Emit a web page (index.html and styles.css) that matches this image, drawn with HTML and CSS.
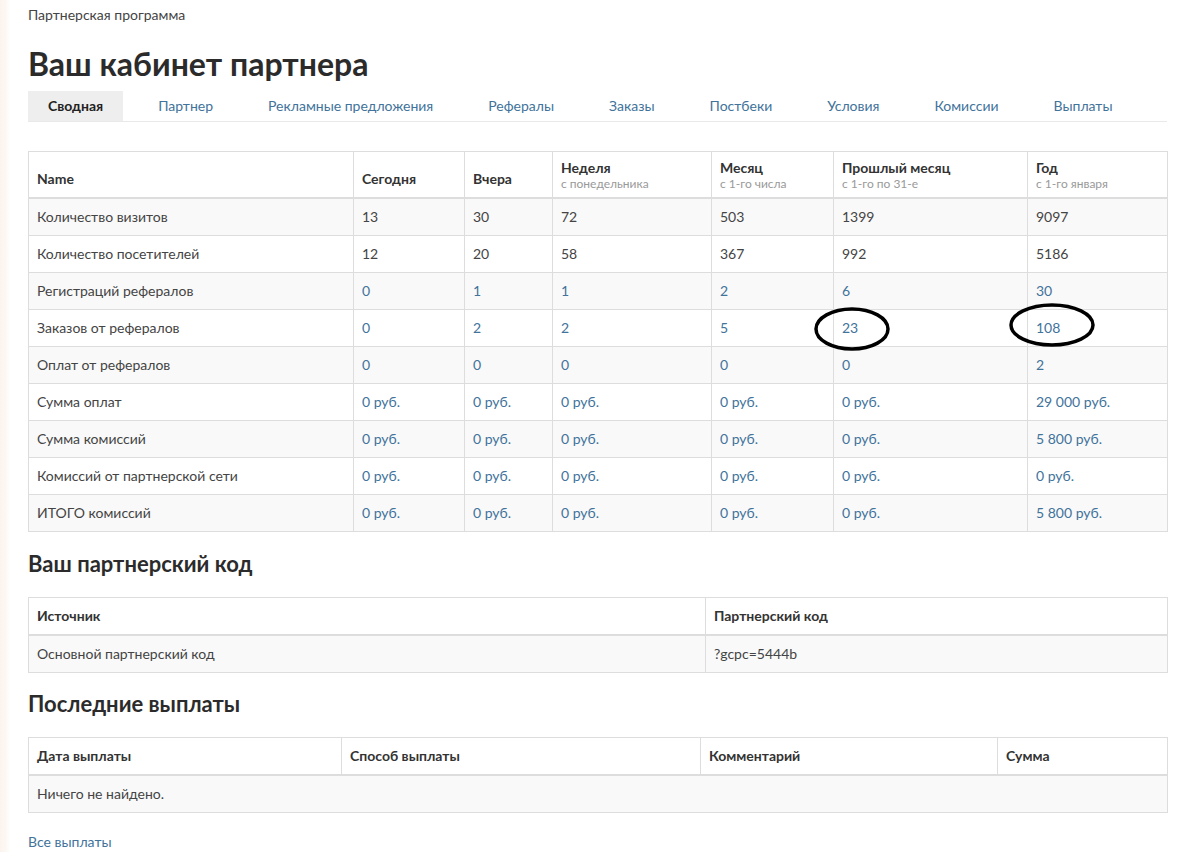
FILE: index.html
```html
<!DOCTYPE html>
<html lang="ru">
<head>
<meta charset="utf-8">
<title>Ваш кабинет партнера</title>
<link rel="stylesheet" href="styles.css">
</head>
<body>
<div class="page">
  <div class="breadcrumb">Партнерская программа</div>
  <h1 class="title">Ваш кабинет партнера</h1>
  <ul class="tabs">
    <li class="tab active">Сводная</li>
    <li class="tab"><a href="#">Партнер</a></li>
    <li class="tab"><a href="#">Рекламные предложения</a></li>
    <li class="tab"><a href="#">Рефералы</a></li>
    <li class="tab"><a href="#">Заказы</a></li>
    <li class="tab"><a href="#">Постбеки</a></li>
    <li class="tab"><a href="#">Условия</a></li>
    <li class="tab"><a href="#">Комиссии</a></li>
    <li class="tab"><a href="#">Выплаты</a></li>
  </ul>

  <table class="grid stats">
    <colgroup>
      <col class="c-name"><col class="c-today"><col class="c-yest"><col class="c-week"><col class="c-month"><col class="c-prev"><col class="c-year">
    </colgroup>
    <thead>
      <tr>
        <th class="single">Name</th>
        <th class="single">Сегодня</th>
        <th class="single">Вчера</th>
        <th>Неделя<span class="sub">с понедельника</span></th>
        <th>Месяц<span class="sub">с 1-го числа</span></th>
        <th>Прошлый месяц<span class="sub">с 1-го по 31-е</span></th>
        <th>Год<span class="sub">с 1-го января</span></th>
      </tr>
    </thead>
    <tbody>
      <tr><td>Количество визитов</td><td>13</td><td>30</td><td>72</td><td>503</td><td>1399</td><td>9097</td></tr>
      <tr><td>Количество посетителей</td><td>12</td><td>20</td><td>58</td><td>367</td><td>992</td><td>5186</td></tr>
      <tr><td>Регистраций рефералов</td><td><a href="#">0</a></td><td><a href="#">1</a></td><td><a href="#">1</a></td><td><a href="#">2</a></td><td><a href="#">6</a></td><td><a href="#">30</a></td></tr>
      <tr><td>Заказов от рефералов</td><td><a href="#">0</a></td><td><a href="#">2</a></td><td><a href="#">2</a></td><td><a href="#">5</a></td>
        <td class="marked"><a href="#">23</a><svg class="ring ring-a" width="78" height="46" viewBox="0 0 78 46"><ellipse cx="39" cy="23" rx="36" ry="20" fill="none" stroke="#000" stroke-width="3.5"/></svg></td>
        <td class="marked"><a href="#">108</a><svg class="ring ring-b" width="88" height="46" viewBox="0 0 88 46"><ellipse cx="44" cy="23" rx="41" ry="20" fill="none" stroke="#000" stroke-width="3.5"/></svg></td></tr>
      <tr><td>Оплат от рефералов</td><td><a href="#">0</a></td><td><a href="#">0</a></td><td><a href="#">0</a></td><td><a href="#">0</a></td><td><a href="#">0</a></td><td><a href="#">2</a></td></tr>
      <tr><td>Сумма оплат</td><td><a href="#">0 руб.</a></td><td><a href="#">0 руб.</a></td><td><a href="#">0 руб.</a></td><td><a href="#">0 руб.</a></td><td><a href="#">0 руб.</a></td><td><a href="#">29 000 руб.</a></td></tr>
      <tr><td>Сумма комиссий</td><td><a href="#">0 руб.</a></td><td><a href="#">0 руб.</a></td><td><a href="#">0 руб.</a></td><td><a href="#">0 руб.</a></td><td><a href="#">0 руб.</a></td><td><a href="#">5 800 руб.</a></td></tr>
      <tr><td>Комиссий от партнерской сети</td><td><a href="#">0 руб.</a></td><td><a href="#">0 руб.</a></td><td><a href="#">0 руб.</a></td><td><a href="#">0 руб.</a></td><td><a href="#">0 руб.</a></td><td><a href="#">0 руб.</a></td></tr>
      <tr><td>ИТОГО комиссий</td><td><a href="#">0 руб.</a></td><td><a href="#">0 руб.</a></td><td><a href="#">0 руб.</a></td><td><a href="#">0 руб.</a></td><td><a href="#">0 руб.</a></td><td><a href="#">5 800 руб.</a></td></tr>
    </tbody>
  </table>

  <h2 class="section">Ваш партнерский код</h2>
  <table class="grid codes">
    <colgroup><col class="c-src"><col class="c-code"></colgroup>
    <thead><tr><th>Источник</th><th>Партнерский код</th></tr></thead>
    <tbody><tr><td>Основной партнерский код</td><td>?gcpc=5444b</td></tr></tbody>
  </table>

  <h2 class="section section-tight">Последние выплаты</h2>
  <table class="grid payouts">
    <colgroup><col class="c-date"><col class="c-method"><col class="c-comment"><col class="c-sum"></colgroup>
    <thead><tr><th>Дата выплаты</th><th>Способ выплаты</th><th>Комментарий</th><th>Сумма</th></tr></thead>
    <tbody><tr><td colspan="4" class="empty">Ничего не найдено.</td></tr></tbody>
  </table>

  <a class="all-link" href="#">Все выплаты</a>
</div>
</body>
</html>
```

FILE: styles.css
```css
html, body {
  margin: 0;
  padding: 0;
  background: #fff;
}

body {
  font-family: "Lato", "Open Sans", "Liberation Sans", sans-serif;
  font-size: 14px;
  line-height: 20px;
  color: #444;
  background: linear-gradient(to right, #fcf3ee 0, #fdf8f5 6px, #fff 10px);
}

a {
  color: #41739b;
  text-decoration: none;
}

.page {
  width: 1139px;
  padding: 6px 0 0 28px;
}

.breadcrumb {
  font-size: 14px;
  line-height: 18px;
  color: #444;
}

.title {
  margin: 21px 0 0;
  font-size: 32px;
  line-height: 38px;
  font-weight: 700;
  color: #2b2b2b;
}

.tabs {
  display: flex;
  margin: 8px 0 0;
  padding: 0;
  list-style: none;
  border-bottom: 1px solid #e9e9e9;
}

.tab {
  padding: 5px 20px;
  margin-right: 15px;
  line-height: 20px;
  font-size: 14px;
}

.tab.active {
  background: #eee;
  font-weight: 700;
  color: #222;
}

.grid {
  width: 1139px;
  border-collapse: collapse;
  table-layout: fixed;
  border: 1px solid #ddd;
}

.grid th,
.grid td {
  border: 1px solid #ddd;
  padding: 8px 8px;
  text-align: left;
  vertical-align: top;
  font-size: 14px;
  line-height: 20px;
}

.grid th {
  font-weight: 700;
  color: #333;
  vertical-align: bottom;
  border-bottom: 2px solid #ddd;
  background: #fff;
}

.grid tbody tr:nth-child(odd) td {
  background: #f9f9f9;
}

.stats {
  margin-top: 29px;
}

.stats th {
  padding-top: 7px;
  padding-bottom: 6px;
  line-height: 17px;
}

.stats th.single {
  padding-bottom: 10px;
}

.sub {
  display: block;
  font-size: 12px;
  line-height: 15px;
  font-weight: 400;
  color: #999;
}

.c-name { width: 325px; }
.c-today { width: 111px; }
.c-yest { width: 88px; }
.c-week { width: 159px; }
.c-month { width: 122px; }
.c-prev { width: 194px; }
.c-year { width: 140px; }

.c-src { width: 677px; }
.c-code { width: 462px; }

.c-date { width: 313px; }
.c-method { width: 359px; }
.c-comment { width: 297px; }
.c-sum { width: 170px; }

.marked {
  position: relative;
}

.ring {
  position: absolute;
  pointer-events: none;
}

.ring-a {
  left: -21px;
  top: -4px;
}

.ring-b {
  left: -20px;
  top: -8px;
}

.section {
  margin: 21px 0 22px;
  font-size: 22px;
  line-height: 22px;
  font-weight: 700;
  color: #2b2b2b;
}

.section-tight {
  margin-top: 20px;
}

.all-link {
  display: block;
  margin-top: 19px;
  font-size: 14px;
  line-height: 20px;
}
```
